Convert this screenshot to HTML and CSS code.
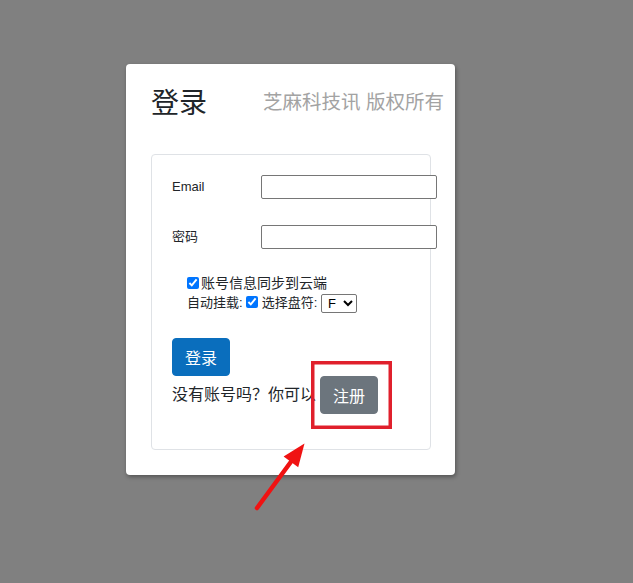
FILE: index.html
```html
<!DOCTYPE html>
<html lang="zh-CN">
<head>
<meta charset="utf-8">
<title>登录</title>
<link rel="stylesheet" href="styles.css">
</head>
<body>
<div class="card">
  <div class="card-head">
    <h2 class="title">登录</h2>
    <span class="brand">芝麻科技讯 版权所有</span>
  </div>
  <form class="panel">
    <div class="field">
      <label class="field-label">Email</label>
      <input class="field-input" type="text">
    </div>
    <div class="field field-second">
      <label class="field-label">密码</label>
      <input class="field-input" type="password">
    </div>
    <div class="options">
      <div class="opt-row opt-sync"><input class="check check-lead" type="checkbox" checked>账号信息同步到云端</div>
      <div class="opt-row opt-mount">自动挂载: <input class="check" type="checkbox" checked> 选择盘符: <select class="drive"><option>F</option><option>G</option></select></div>
    </div>
    <button class="btn btn-primary" type="button">登录</button>
    <div class="signup">
      <span class="signup-text">没有账号吗？你可以</span>
      <button class="btn btn-secondary" type="button">注册</button>
    </div>
  </form>
</div>
<svg class="annot" width="633" height="583" viewBox="0 0 633 583">
  <rect x="312.75" y="362.75" width="77.5" height="64.5" fill="none" stroke="#e0202c" stroke-width="3.5"/>
  <line x1="257" y1="508" x2="293" y2="459" stroke="#f01212" stroke-width="4.5" stroke-linecap="round"/>
  <polygon points="304.5,443.5 298.2,467.2 283.6,456.4" fill="#f01212"/>
</svg>
</body>
</html>
```

FILE: styles.css
```css
* {
  box-sizing: border-box;
}

html, body {
  margin: 0;
  background: #808080;
}

body {
  min-height: 583px;
  padding: 64px 0 0 126px;
  font-family: "Liberation Sans", "Noto Sans CJK SC", sans-serif;
  color: #212529;
}

.card {
  width: 329px;
  background: #ffffff;
  border-radius: 4px;
  padding: 20px 24px 25px 25px;
  box-shadow: 1px 2px 4px rgba(0, 0, 0, 0.35);
}

.card-head {
  display: flex;
  align-items: center;
  height: 40px;
  margin-right: -13px;
  margin-bottom: 30px;
}

.title {
  margin: 0;
  font-size: 28px;
  font-weight: 400;
  line-height: 40px;
  color: #212529;
}

.brand {
  margin-left: auto;
  margin-bottom: 5px;
  font-size: 19.5px;
  line-height: 26px;
  color: #a3a3a3;
  white-space: nowrap;
}

.panel {
  width: 280px;
  border: 1px solid #dfe2e6;
  border-radius: 4px;
  padding: 20px 0 35px 20px;
}

.field {
  display: flex;
  align-items: center;
  height: 24px;
}

.field-second {
  margin-top: 26px;
}

.field-label {
  width: 89px;
  flex: none;
  font-size: 13px;
  line-height: 20px;
}

.field-input {
  flex: none;
  width: 176px;
  height: 24px;
  margin: 0;
  border: 1px solid #767676;
  border-radius: 2px;
  background: #ffffff;
  font-size: 13px;
}

.options {
  margin-top: 24px;
  padding-left: 15px;
}

.opt-row {
  height: 20px;
  line-height: 20px;
  white-space: nowrap;
}

.opt-sync {
  font-size: 14px;
}

.opt-mount {
  font-size: 13px;
}

.check {
  width: 12px;
  height: 12px;
  margin: 0;
  vertical-align: -1px;
  accent-color: #0075ff;
}

.check-lead {
  margin-right: 2px;
}

.drive {
  width: 36px;
  height: 19px;
  margin: 0;
  padding: 0 0 0 2px;
  border: 1px solid #767676;
  border-radius: 2px;
  background: #ffffff;
  font-family: "Liberation Sans", sans-serif;
  font-size: 13px;
  color: #000000;
  vertical-align: middle;
}

.btn {
  display: inline-block;
  margin: 0;
  padding: 6px 12px;
  border: 1px solid transparent;
  border-radius: 4px;
  font-family: "Noto Sans CJK SC", sans-serif;
  font-size: 16px;
  line-height: 24px;
  color: #ffffff;
}

.btn-primary {
  margin-top: 25px;
  background: #0a6ebd;
  border-color: #0a6ebd;
}

.btn-secondary {
  background: #6c757d;
  border-color: #6c757d;
}

.signup {
  display: flex;
  align-items: center;
  gap: 4px;
}

.signup-text {
  font-size: 16px;
  line-height: 24px;
  white-space: nowrap;
}

.annot {
  position: absolute;
  left: 0;
  top: 0;
  pointer-events: none;
}
```
